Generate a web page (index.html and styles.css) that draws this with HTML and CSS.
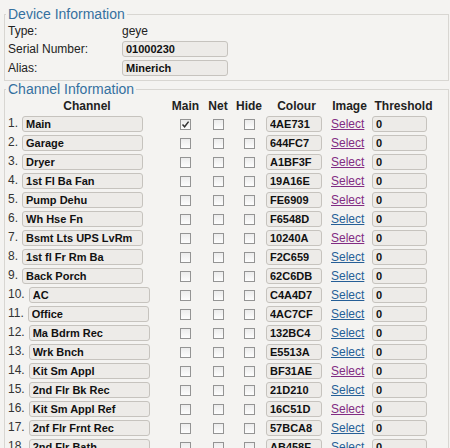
FILE: index.html
```html
<!DOCTYPE html>
<html lang="en">
<head>
  <meta charset="UTF-8">
  <title>Device Settings</title>
  <link rel="stylesheet" href="styles.css">
</head>
<body>

  <!-- Device info -->
  <fieldset class="device">
    <legend>Device Information</legend>
    <table class="device-table">
      <tr class="first">
        <td class="label">Type:</td>
        <td class="value">geye</td>
      </tr>
      <tr>
        <td class="label">Serial Number:</td>
        <td class="value"><input class="field wide" type="text" value="01000230" readonly></td>
      </tr>
      <tr>
        <td class="label">Alias:</td>
        <td class="value"><input class="field wide" type="text" value="Minerich" readonly></td>
      </tr>
    </table>
  </fieldset>

  <!-- Channels -->
  <fieldset class="channels-box">
    <legend>Channel Information</legend>
    <table class="channels">
      <colgroup>
        <col class="c-name">
        <col class="c-main">
        <col class="c-net">
        <col class="c-hide">
        <col class="c-colour">
        <col class="c-image">
        <col class="c-thr">
      </colgroup>
      <tr>
        <th>Channel</th>
        <th>Main</th>
        <th>Net</th>
        <th>Hide</th>
        <th>Colour</th>
        <th>Image</th>
        <th>Threshold</th>
      </tr>
      <tr>
        <td class="name">1.<input class="field chan" type="text" value="Main" readonly></td>
        <td class="chk"><span class="cb checked"><svg width="9" height="9" viewBox="0 0 9 9"><path d="M1.5 4.5 L3.6 6.8 L7.6 1.6" fill="none" stroke="#333" stroke-width="1.5"/></svg></span></td>
        <td class="chk"><span class="cb"></span></td>
        <td class="chk"><span class="cb"></span></td>
        <td><input class="field colour" type="text" value="4AE731" readonly></td>
        <td class="img"><a class="visited" href="#">Select</a></td>
        <td><input class="field thr" type="text" value="0" readonly></td>
      </tr>
      <tr>
        <td class="name">2.<input class="field chan" type="text" value="Garage" readonly></td>
        <td class="chk"><span class="cb"></span></td>
        <td class="chk"><span class="cb"></span></td>
        <td class="chk"><span class="cb"></span></td>
        <td><input class="field colour" type="text" value="644FC7" readonly></td>
        <td class="img"><a class="visited" href="#">Select</a></td>
        <td><input class="field thr" type="text" value="0" readonly></td>
      </tr>
      <tr>
        <td class="name">3.<input class="field chan" type="text" value="Dryer" readonly></td>
        <td class="chk"><span class="cb"></span></td>
        <td class="chk"><span class="cb"></span></td>
        <td class="chk"><span class="cb"></span></td>
        <td><input class="field colour" type="text" value="A1BF3F" readonly></td>
        <td class="img"><a class="visited" href="#">Select</a></td>
        <td><input class="field thr" type="text" value="0" readonly></td>
      </tr>
      <tr>
        <td class="name">4.<input class="field chan" type="text" value="1st Fl Ba Fan" readonly></td>
        <td class="chk"><span class="cb"></span></td>
        <td class="chk"><span class="cb"></span></td>
        <td class="chk"><span class="cb"></span></td>
        <td><input class="field colour" type="text" value="19A16E" readonly></td>
        <td class="img"><a class="visited" href="#">Select</a></td>
        <td><input class="field thr" type="text" value="0" readonly></td>
      </tr>
      <tr>
        <td class="name">5.<input class="field chan" type="text" value="Pump Dehu" readonly></td>
        <td class="chk"><span class="cb"></span></td>
        <td class="chk"><span class="cb"></span></td>
        <td class="chk"><span class="cb"></span></td>
        <td><input class="field colour" type="text" value="FE6909" readonly></td>
        <td class="img"><a class="visited" href="#">Select</a></td>
        <td><input class="field thr" type="text" value="0" readonly></td>
      </tr>
      <tr>
        <td class="name">6.<input class="field chan" type="text" value="Wh Hse Fn" readonly></td>
        <td class="chk"><span class="cb"></span></td>
        <td class="chk"><span class="cb"></span></td>
        <td class="chk"><span class="cb"></span></td>
        <td><input class="field colour" type="text" value="F6548D" readonly></td>
        <td class="img"><a href="#">Select</a></td>
        <td><input class="field thr" type="text" value="0" readonly></td>
      </tr>
      <tr>
        <td class="name">7.<input class="field chan" type="text" value="Bsmt Lts UPS LvRm" readonly></td>
        <td class="chk"><span class="cb"></span></td>
        <td class="chk"><span class="cb"></span></td>
        <td class="chk"><span class="cb"></span></td>
        <td><input class="field colour" type="text" value="10240A" readonly></td>
        <td class="img"><a class="visited" href="#">Select</a></td>
        <td><input class="field thr" type="text" value="0" readonly></td>
      </tr>
      <tr>
        <td class="name">8.<input class="field chan" type="text" value="1st fl Fr Rm Ba" readonly></td>
        <td class="chk"><span class="cb"></span></td>
        <td class="chk"><span class="cb"></span></td>
        <td class="chk"><span class="cb"></span></td>
        <td><input class="field colour" type="text" value="F2C659" readonly></td>
        <td class="img"><a href="#">Select</a></td>
        <td><input class="field thr" type="text" value="0" readonly></td>
      </tr>
      <tr>
        <td class="name">9.<input class="field chan" type="text" value="Back Porch" readonly></td>
        <td class="chk"><span class="cb"></span></td>
        <td class="chk"><span class="cb"></span></td>
        <td class="chk"><span class="cb"></span></td>
        <td><input class="field colour" type="text" value="62C6DB" readonly></td>
        <td class="img"><a href="#">Select</a></td>
        <td><input class="field thr" type="text" value="0" readonly></td>
      </tr>
      <tr>
        <td class="name">10.<input class="field chan" type="text" value="AC" readonly></td>
        <td class="chk"><span class="cb"></span></td>
        <td class="chk"><span class="cb"></span></td>
        <td class="chk"><span class="cb"></span></td>
        <td><input class="field colour" type="text" value="C4A4D7" readonly></td>
        <td class="img"><a href="#">Select</a></td>
        <td><input class="field thr" type="text" value="0" readonly></td>
      </tr>
      <tr>
        <td class="name">11.<input class="field chan" type="text" value="Office" readonly></td>
        <td class="chk"><span class="cb"></span></td>
        <td class="chk"><span class="cb"></span></td>
        <td class="chk"><span class="cb"></span></td>
        <td><input class="field colour" type="text" value="4AC7CF" readonly></td>
        <td class="img"><a href="#">Select</a></td>
        <td><input class="field thr" type="text" value="0" readonly></td>
      </tr>
      <tr>
        <td class="name">12.<input class="field chan" type="text" value="Ma Bdrm Rec" readonly></td>
        <td class="chk"><span class="cb"></span></td>
        <td class="chk"><span class="cb"></span></td>
        <td class="chk"><span class="cb"></span></td>
        <td><input class="field colour" type="text" value="132BC4" readonly></td>
        <td class="img"><a href="#">Select</a></td>
        <td><input class="field thr" type="text" value="0" readonly></td>
      </tr>
      <tr>
        <td class="name">13.<input class="field chan" type="text" value="Wrk Bnch" readonly></td>
        <td class="chk"><span class="cb"></span></td>
        <td class="chk"><span class="cb"></span></td>
        <td class="chk"><span class="cb"></span></td>
        <td><input class="field colour" type="text" value="E5513A" readonly></td>
        <td class="img"><a href="#">Select</a></td>
        <td><input class="field thr" type="text" value="0" readonly></td>
      </tr>
      <tr>
        <td class="name">14.<input class="field chan" type="text" value="Kit Sm Appl" readonly></td>
        <td class="chk"><span class="cb"></span></td>
        <td class="chk"><span class="cb"></span></td>
        <td class="chk"><span class="cb"></span></td>
        <td><input class="field colour" type="text" value="BF31AE" readonly></td>
        <td class="img"><a class="visited" href="#">Select</a></td>
        <td><input class="field thr" type="text" value="0" readonly></td>
      </tr>
      <tr>
        <td class="name">15.<input class="field chan" type="text" value="2nd Flr Bk Rec" readonly></td>
        <td class="chk"><span class="cb"></span></td>
        <td class="chk"><span class="cb"></span></td>
        <td class="chk"><span class="cb"></span></td>
        <td><input class="field colour" type="text" value="21D210" readonly></td>
        <td class="img"><a href="#">Select</a></td>
        <td><input class="field thr" type="text" value="0" readonly></td>
      </tr>
      <tr>
        <td class="name">16.<input class="field chan" type="text" value="Kit Sm Appl Ref" readonly></td>
        <td class="chk"><span class="cb"></span></td>
        <td class="chk"><span class="cb"></span></td>
        <td class="chk"><span class="cb"></span></td>
        <td><input class="field colour" type="text" value="16C51D" readonly></td>
        <td class="img"><a class="visited" href="#">Select</a></td>
        <td><input class="field thr" type="text" value="0" readonly></td>
      </tr>
      <tr>
        <td class="name">17.<input class="field chan" type="text" value="2nf Flr Frnt Rec" readonly></td>
        <td class="chk"><span class="cb"></span></td>
        <td class="chk"><span class="cb"></span></td>
        <td class="chk"><span class="cb"></span></td>
        <td><input class="field colour" type="text" value="57BCA8" readonly></td>
        <td class="img"><a href="#">Select</a></td>
        <td><input class="field thr" type="text" value="0" readonly></td>
      </tr>
      <tr>
        <td class="name">18.<input class="field chan" type="text" value="2nd Flr Bath" readonly></td>
        <td class="chk"><span class="cb"></span></td>
        <td class="chk"><span class="cb"></span></td>
        <td class="chk"><span class="cb"></span></td>
        <td><input class="field colour" type="text" value="AB458F" readonly></td>
        <td class="img"><a href="#">Select</a></td>
        <td><input class="field thr" type="text" value="0" readonly></td>
      </tr>
    </table>
  </fieldset>

</body>
</html>
```

FILE: styles.css
```css
body {
  margin: 0;
  font-family: 'Liberation Sans', Arial, sans-serif;
  font-size: 12px;
  color: #222;
  background: #f4f3f1;
  overflow: hidden;
}

fieldset {
  margin: 0 1px 0 4px;
  padding: 0 1px 3px;
  border: 1px solid #d8d6d2;
  min-width: 0;
}

legend {
  padding: 0 2px;
  font-size: 14px;
  line-height: 16px;
  color: #34709f;
}

.device {
  margin-top: 6px;
}

/* device info */
.device-table {
  border-spacing: 0;
}

.device-table td {
  padding: 0 0 0 2px;
  height: 19px;
  vertical-align: middle;
}

.device-table tr.first td {
  height: 17px;
}

.device-table .label {
  width: 112px;
}

.field {
  box-sizing: border-box;
  height: 16px;
  margin: 0;
  padding: 0 3px;
  border: 1px solid #c6c3be;
  border-radius: 3px;
  background: #edebe8;
  font-family: 'Liberation Sans', Arial, sans-serif;
  font-size: 11px;
  font-weight: bold;
  color: #111;
  vertical-align: middle;
  outline: none;
}

.field.wide {
  width: 106px;
}

/* channel table */
.channels {
  border-spacing: 0;
  table-layout: fixed;
  width: 430px;
}

.c-name { width: 162px; }
.c-main { width: 35px; }
.c-net { width: 30px; }
.c-hide { width: 32px; }
.c-colour { width: 63px; }
.c-image { width: 43px; }
.c-thr { width: 65px; }

.channels th {
  height: 17px;
  padding: 0;
  font-weight: bold;
  text-align: center;
  color: #222;
}

.channels td {
  height: 19px;
  padding: 0 0 0 1px;
  vertical-align: middle;
  white-space: nowrap;
}

.channels td.name {
  padding-left: 2px;
  color: #333;
}

.field.chan {
  width: 121px;
  margin-left: 4px;
}

.field.colour {
  width: 56px;
}

.field.thr {
  width: 55px;
}

.channels td.chk {
  text-align: center;
  padding: 0;
}

.cb {
  display: inline-block;
  box-sizing: border-box;
  width: 11px;
  height: 11px;
  border: 1px solid #949494;
  background: linear-gradient(#ececec, #fdfdfd);
  vertical-align: middle;
}

.cb svg {
  display: block;
}

.channels td.img {
  padding-left: 3px;
}

.img a {
  color: #265f97;
  text-decoration: underline;
}

.img a.visited {
  color: #822c83;
}
```
